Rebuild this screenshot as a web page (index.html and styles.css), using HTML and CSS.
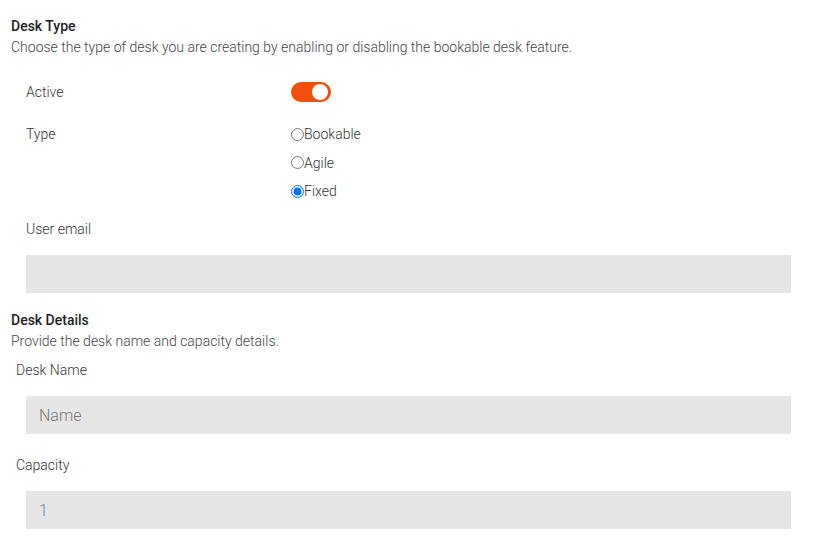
FILE: index.html
```html
<!DOCTYPE html>
<html>
<head>
<meta charset="utf-8">
<link rel="stylesheet" href="styles.css">
</head>
<body>
<div class="page">
  <section class="section">
    <h2 class="title">Desk Type</h2>
    <p class="desc">Choose the type of desk you are creating by enabling or disabling the bookable desk feature.</p>
    <div class="row row-active">
      <div class="label">Active</div>
      <div class="control"><span class="toggle"><span class="knob"></span></span></div>
    </div>
    <div class="row row-type">
      <div class="label">Type</div>
      <div class="control radios">
        <label class="radio"><input type="radio" name="type">Bookable</label>
        <label class="radio"><input type="radio" name="type">Agile</label>
        <label class="radio"><input type="radio" name="type" checked>Fixed</label>
      </div>
    </div>
    <div class="field field-email">
      <div class="label">User email</div>
      <input class="input" type="text">
    </div>
  </section>
  <section class="section section-details">
    <h2 class="title">Desk Details</h2>
    <p class="desc">Provide the desk name and capacity details.</p>
    <div class="field field-name">
      <div class="label label-outdent">Desk Name</div>
      <input class="input" type="text" placeholder="Name">
    </div>
    <div class="field field-capacity">
      <div class="label label-outdent">Capacity</div>
      <input class="input input-value" type="text" value="1">
    </div>
  </section>
</div>
</body>
</html>
```
FILE: styles.css
```css
* { box-sizing: border-box; }
html, body { margin: 0; padding: 0; background: #fff; }
body {
  font-family: Roboto, "Liberation Sans", Arial, sans-serif;
  color: #333;
  font-size: 14px;
}
.page { padding: 16px 45px 0 11px; }
.title {
  margin: 0;
  font-size: 14px;
  line-height: 20px;
  font-weight: 500;
  color: #1f1f1f;
}
.desc {
  margin: 2px 0 0;
  font-size: 14px;
  line-height: 18px;
  font-weight: 300;
  color: #444;
}
.row {
  display: grid;
  grid-template-columns: 265px 1fr;
  padding-left: 15px;
}
.row-active { margin-top: 26px; }
.row-type { margin-top: 22px; }
.label {
  font-size: 14px;
  line-height: 20px;
  font-weight: 300;
  color: #333;
}
.toggle {
  display: block;
  width: 40px;
  height: 20px;
  border-radius: 10px;
  background: #f24e0c;
  position: relative;
}
.knob {
  position: absolute;
  top: 2px;
  right: 3px;
  width: 16px;
  height: 16px;
  border-radius: 50%;
  background: #fff;
}
.radios { display: flex; flex-direction: column; gap: 8.5px; }
.radio {
  display: flex;
  align-items: center;
  font-size: 14px;
  line-height: 20px;
  font-weight: 300;
  color: #333;
}
.radio input {
  margin: 0;
  width: 13px;
  height: 13px;
}
.field { padding-left: 15px; }
.field-email { margin-top: 18px; }
.input {
  display: block;
  width: 100%;
  height: 38px;
  margin-top: 16px;
  border: none;
  outline: none;
  background: #e6e6e6;
  padding: 0 13px;
  font-family: Roboto, "Liberation Sans", Arial, sans-serif;
  font-size: 16px;
  font-weight: 300;
  color: #6b7c93;
}
.input::placeholder { color: #777; }
.input-value { color: #6f86a3; }
.section-details { margin-top: 17px; }
.field-name { margin-top: 10px; }
.field-capacity { margin-top: 21px; }
.label-outdent { margin-left: -10px; }
```
